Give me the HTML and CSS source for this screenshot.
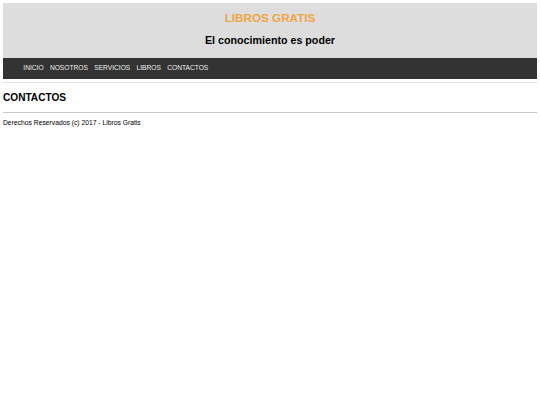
FILE: index.html
```html
<!DOCTYPE html>
<html lang="es">
<head>
<meta charset="utf-8">
<title>Libros Gratis</title>
<link rel="stylesheet" href="styles.css">
</head>
<body>
<header class="site-header">
  <h1 class="site-title">LIBROS GRATIS</h1>
  <h3 class="site-tagline">El conocimiento es poder</h3>
</header>
<nav class="main-nav">
  <ul class="nav-list">
    <li><a href="#">INICIO</a></li>
    <li><a href="#">NOSOTROS</a></li>
    <li><a href="#">SERVICIOS</a></li>
    <li><a href="#">LIBROS</a></li>
    <li><a href="#">CONTACTOS</a></li>
  </ul>
</nav>
<hr class="rule rule-top">
<main class="content">
  <h2 class="page-title">CONTACTOS</h2>
</main>
<hr class="rule rule-bottom">
<footer class="site-footer">Derechos Reservados (c) 2017 - Libros Gratis</footer>
</body>
</html>
```

FILE: styles.css
```css
html, body {
  background: #fff;
}
body {
  margin: 3px;
  font-family: "Liberation Sans", Arial, sans-serif;
  color: #000;
}
.site-header {
  background: #dddddd;
  text-align: center;
  padding: 8.2px 0 10.9px;
}
.site-title {
  margin: 0;
  font-size: 11.7px;
  line-height: 14px;
  font-weight: bold;
  color: #f0a543;
}
.site-tagline {
  margin: 8.9px 0 0;
  font-size: 10.7px;
  line-height: 13px;
  font-weight: bold;
  color: #000;
}
.main-nav {
  background: #333333;
  padding: 6.4px 0 6.9px 20.3px;
}
.nav-list {
  list-style: none;
  margin: 0;
  padding: 0;
  display: flex;
  gap: 6.3px;
}
.nav-list a {
  display: block;
  color: #f0f0f0;
  text-decoration: none;
  font-size: 6.65px;
  line-height: 8px;
}
.rule {
  border: 0;
  height: 1px;
  margin: 0;
}
.rule-top {
  background: #e0e0e0;
  margin-top: 2.7px;
}
.content {
  padding-top: 8.8px;
}
.page-title {
  margin: 0;
  font-size: 10.1px;
  line-height: 12px;
  font-weight: bold;
}
.rule-bottom {
  background: #c8c8c8;
  margin-top: 8.2px;
}
.site-footer {
  margin-top: 5.8px;
  font-size: 6.75px;
  line-height: 8px;
}
```
